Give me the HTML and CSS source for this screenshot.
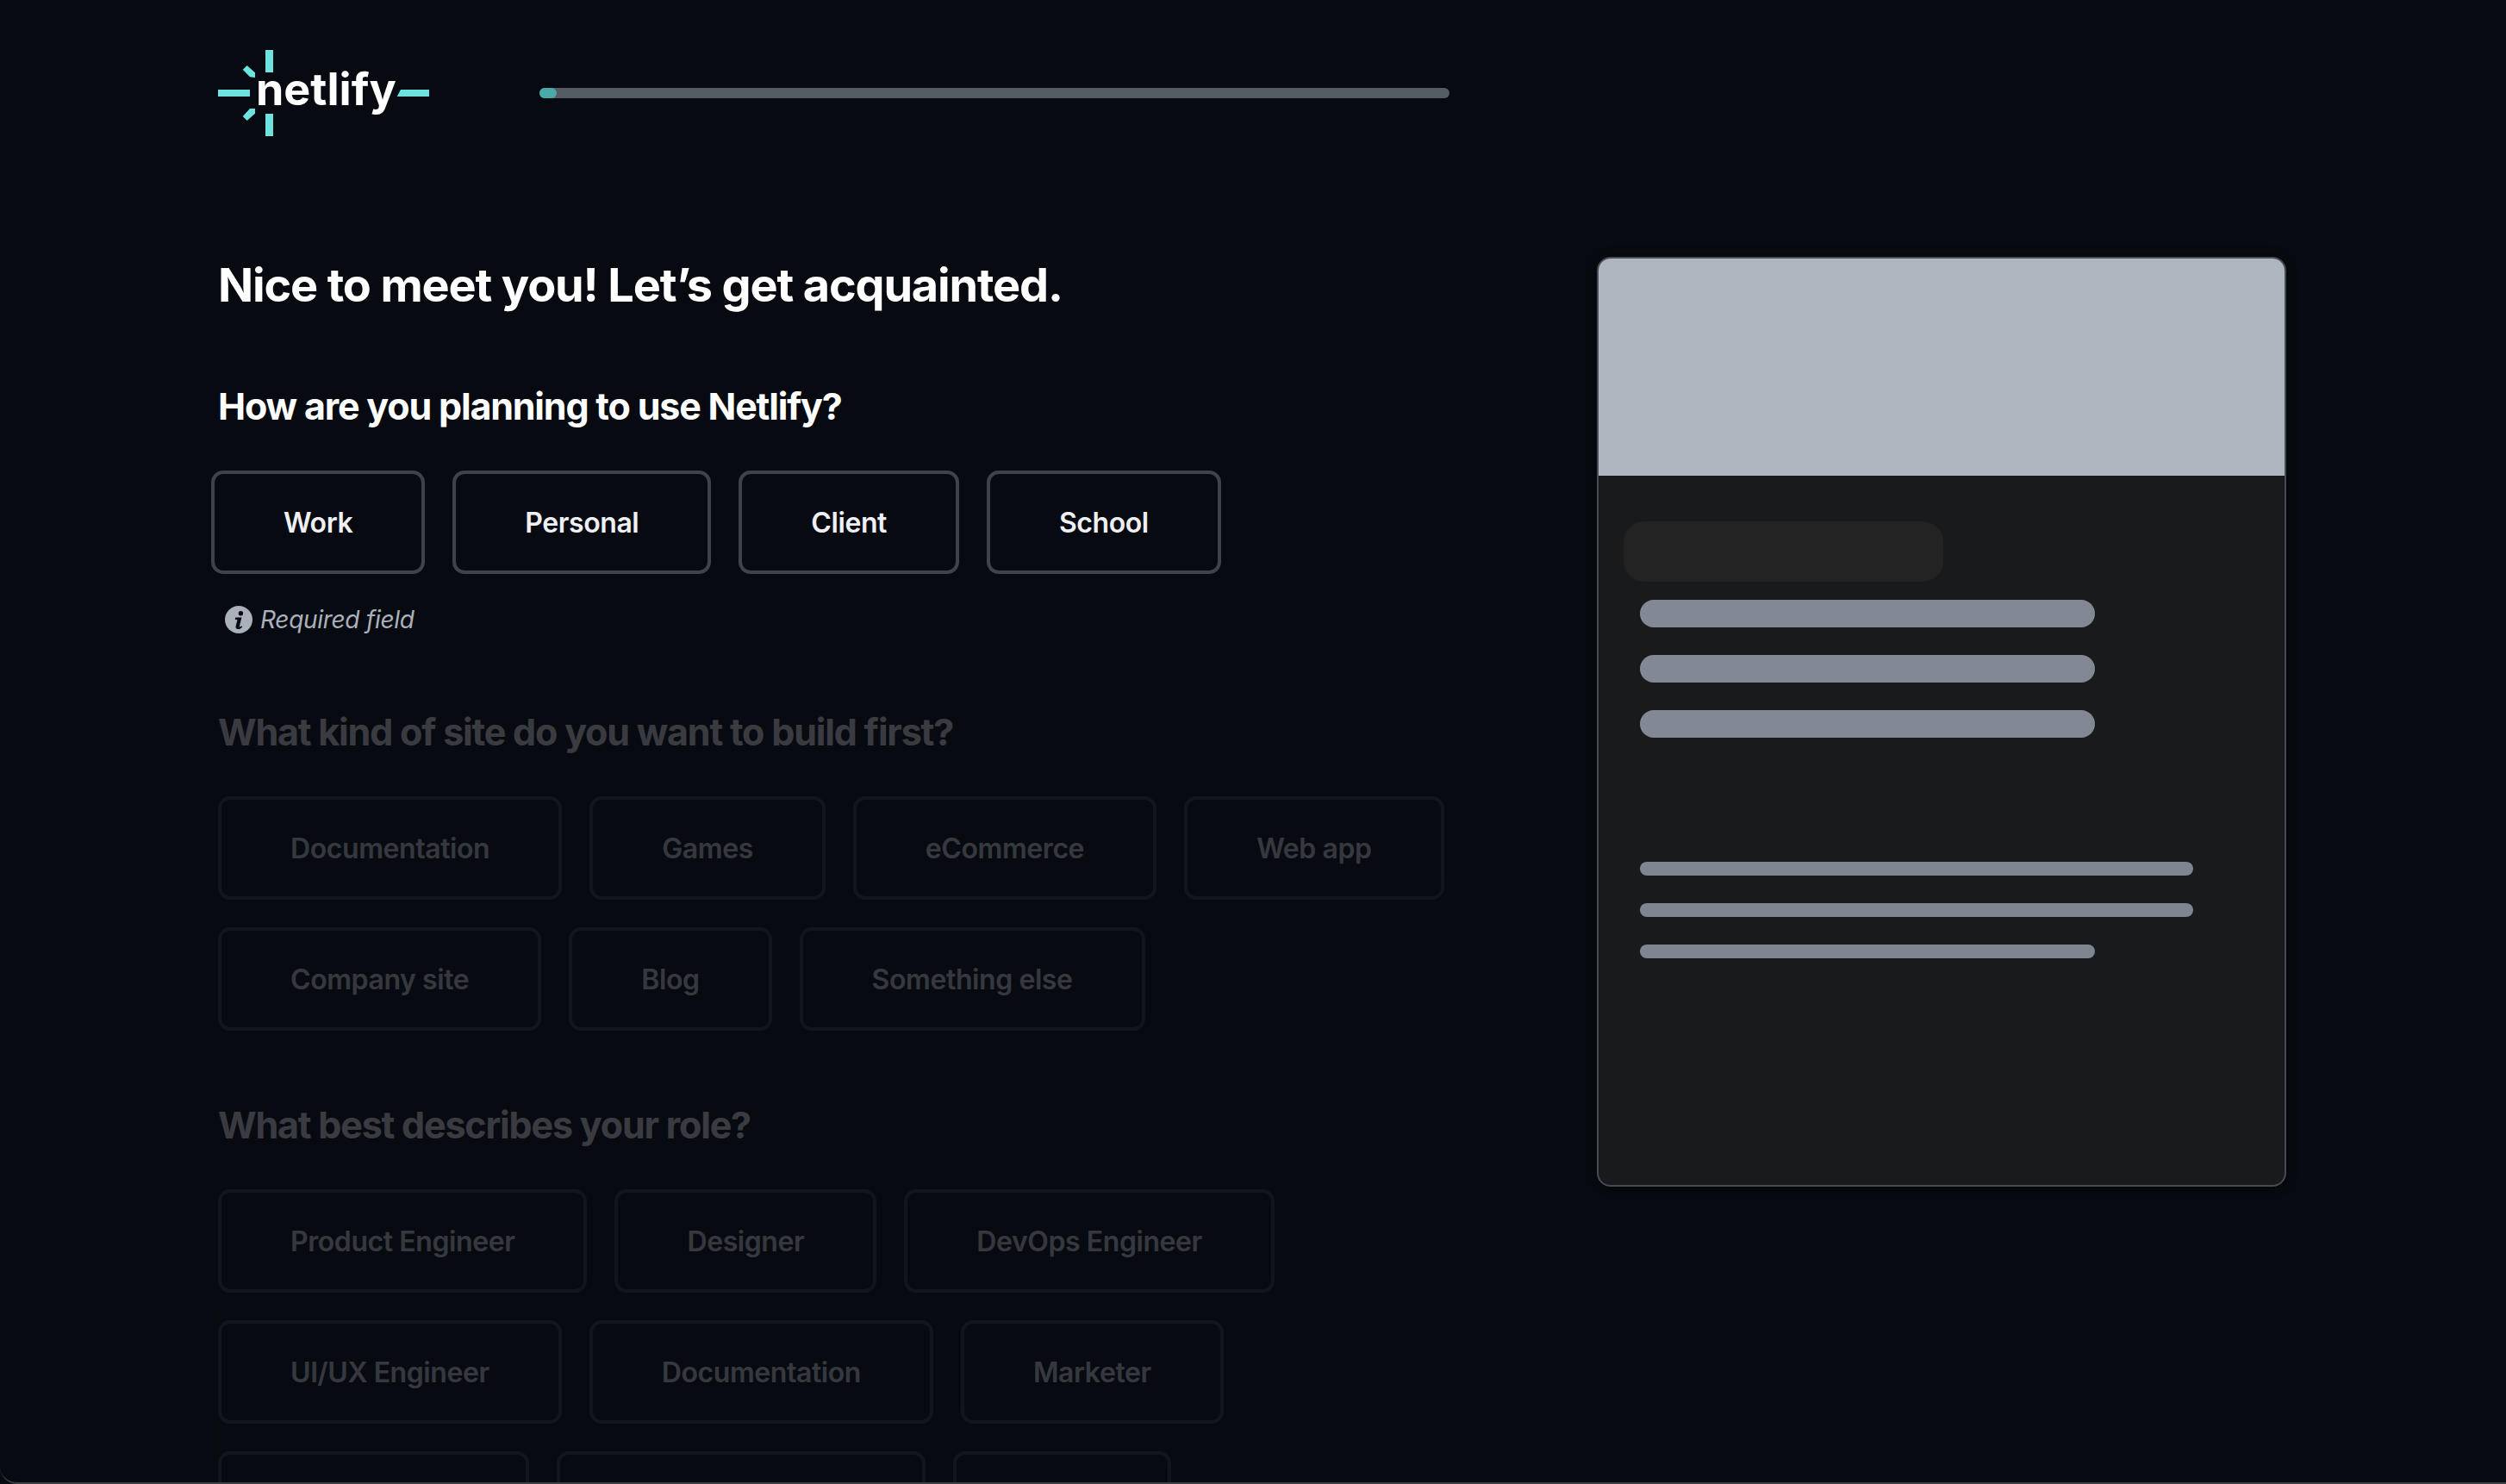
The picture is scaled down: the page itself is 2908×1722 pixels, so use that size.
FILE: index.html
```html
<!DOCTYPE html>
<html lang="en">
<head>
    <meta charset="UTF-8">
    <title>Netlify - Nice to meet you</title>
    <link rel="stylesheet" href="styles.css">
</head>
<body>
    <div class="page">
        <div class="left">
            <div class="header">
                <svg class="logo" width="245" height="100" viewBox="0 0 245 100">
                    <rect class="spark" x="55" y="0" width="9" height="26"/>
                    <rect class="spark" x="55" y="74" width="9" height="26"/>
                    <rect class="spark" x="0" y="46" width="37" height="8"/>
                    <polygon class="spark" points="207.7,54 212,46 245,46 245,54"/>
                    <polygon class="spark" points="28.7,22.7 33.7,18 43,26.3 43,32 37,31.3"/>
                    <polygon class="spark" points="28.7,77 37,68 43,68 43,73.7 33.7,82"/>
                    <text class="logo-text" x="44" y="64">netlify</text>
                </svg>
                <div class="progress"><div class="progress-fill"></div></div>
            </div>

            <h1 class="title">Nice to meet you! Let’s get acquainted.</h1>

            <h2 class="question first">How are you planning to use Netlify?</h2>
            <div class="options active">
                <button class="option">Work</button>
                <button class="option">Personal</button>
                <button class="option">Client</button>
                <button class="option">School</button>
            </div>
            <div class="hint">
                <svg class="hint-icon" width="32" height="32" viewBox="0 0 32 32">
                    <circle class="hint-disc" cx="16" cy="16" r="16"/>
                    <circle class="hint-mark" cx="18.4" cy="8.8" r="2.7"/>
                    <path class="hint-mark" d="M12.2 13.6h7.2l-2.5 10c-.2.8.5 1.1 1.1.7l1.4-1 .8 1.1c-1.5 1.6-3.2 2.6-5 2.6-2 0-3.1-1.3-2.6-3.2l1.9-7.9h-2.7z"/>
                </svg>
                <span class="hint-text">Required field</span>
            </div>

            <div class="faded">
                <h2 class="question">What kind of site do you want to build first?</h2>
                <div class="options">
                    <button class="option">Documentation</button>
                    <button class="option">Games</button>
                    <button class="option">eCommerce</button>
                    <button class="option">Web app</button>
                    <button class="option">Company site</button>
                    <button class="option">Blog</button>
                    <button class="option">Something else</button>
                </div>

                <h2 class="question second">What best describes your role?</h2>
                <div class="options">
                    <button class="option">Product Engineer</button>
                    <button class="option">Designer</button>
                    <button class="option">DevOps Engineer</button>
                    <button class="option">UI/UX Engineer</button>
                    <button class="option">Documentation</button>
                    <button class="option">Marketer</button>
                    <!-- only the top edge of this row is on screen -->
                    <button class="option cut-a"></button>
                    <button class="option cut-b"></button>
                    <button class="option cut-c"></button>
                </div>
            </div>
        </div>

        <div class="card">
            <div class="card-top"></div>
            <div class="card-body">
                <div class="card-pill"></div>
                <div class="bars">
                    <div class="bar"></div>
                    <div class="bar"></div>
                    <div class="bar"></div>
                </div>
                <div class="lines">
                    <div class="line long"></div>
                    <div class="line long"></div>
                    <div class="line"></div>
                </div>
            </div>
        </div>
    </div>
</body>
</html>
```

FILE: styles.css
```css
* {
    margin: 0;
    padding: 0;
    box-sizing: border-box;
}

body {
    font-family: Inter, "Liberation Sans", sans-serif;
    background-color: #070a10;
}

.page {
    display: flex;
    height: 1722px;
    padding: 58px 0 0 253px;
    overflow: hidden;
    border-bottom: 2px solid #3d4044;
    border-bottom-left-radius: 20px;
}

.left {
    width: 1429px;
    flex-shrink: 0;
}

.header {
    display: flex;
    align-items: center;
    gap: 128px;
}

.logo {
    display: block;
    flex-shrink: 0;
}

.spark {
    fill: #6ee2de;
}

.logo-text {
    font-family: Inter, sans-serif;
    font-size: 52px;
    font-weight: 700;
    fill: #fff;
}

.progress {
    width: 1056px;
    height: 12px;
    border-radius: 6px;
    background-color: #555b63;
}

.progress-fill {
    width: 20px;
    height: 12px;
    border-radius: 6px;
    background-color: #4aa8a8;
}

.title {
    margin-top: 139px;
    font-size: 54px;
    line-height: 68px;
    font-weight: 700;
    letter-spacing: -1.16px;
    color: #fff;
}

.question {
    font-size: 43px;
    line-height: 52px;
    font-weight: 700;
    letter-spacing: -1.19px;
    color: #fff;
}

.question.first {
    margin-top: 80px;
}

.question.second {
    margin-top: 83px;
}

.options {
    display: flex;
    flex-wrap: wrap;
    gap: 32px;
    margin-top: 49px;
}

.options.active {
    margin-left: -8px;
}

.option {
    height: 120px;
    padding: 0 80px;
    font-family: inherit;
    font-size: 32px;
    font-weight: 600;
    letter-spacing: -0.42px;
    color: #eef0f4;
    background: none;
    border: 4px solid #3e434b;
    border-radius: 14px;
}

.option.cut-a {
    width: 361px;
}

.option.cut-b {
    width: 428px;
}

.option.cut-c {
    width: 253px;
}

.hint {
    display: flex;
    align-items: center;
    gap: 9px;
    margin: 37px 0 0 8px;
    height: 32px;
}

.hint-disc {
    fill: #aab1bb;
}

.hint-mark {
    fill: #070a10;
}

.hint-text {
    font-size: 28px;
    font-style: italic;
    letter-spacing: -0.3px;
    color: #aab1bb;
}

.faded {
    margin-top: 88px;
    opacity: 0.2;
}

.card {
    width: 800px;
    height: 1079px;
    margin: 240px 0 0 171px;
    flex-shrink: 0;
    overflow: hidden;
    border: 2px solid #464c55;
    border-radius: 16px;
    background-color: #191a1c;
    box-shadow: 0 0 12px rgba(0, 0, 0, 0.5);
}

.card-top {
    height: 252px;
    background-color: #aeb5bf;
}

.card-body {
    padding: 53px 0 0 29px;
}

.card-pill {
    width: 371px;
    height: 70px;
    border-radius: 24px;
    background-color: #232323;
}

.bars {
    display: flex;
    flex-direction: column;
    gap: 32px;
    margin: 21px 0 0 19px;
}

.bar {
    width: 528px;
    height: 32px;
    border-radius: 16px;
    background-color: #828994;
}

.lines {
    display: flex;
    flex-direction: column;
    gap: 32px;
    margin: 144px 0 0 19px;
}

.line {
    width: 528px;
    height: 16px;
    border-radius: 8px;
    background-color: #7f8690;
}

.line.long {
    width: 642px;
}
```
